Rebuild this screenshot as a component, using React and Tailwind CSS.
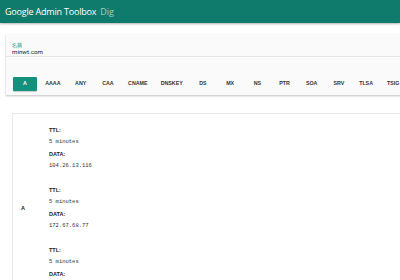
import React from "react";

const tabs = ["A","AAAA","ANY","CAA","CNAME","DNSKEY","DS","MX","NS","PTR","SOA","SRV","TLSA","TSIG","TXT"];
const records = ["104.26.13.116","172.67.68.77","104.26.12.116"];

export default function App() {
  return (
    <div className="w-[400px] h-[280px] overflow-hidden bg-white font-['Liberation_Sans',Arial,sans-serif]">
      <div className="h-[23px] bg-[#0f7b6c] flex items-center pl-[5px] gap-[4px] shadow-[0_1px_2px_rgba(0,0,0,0.3)] font-['Open_Sans',Roboto,sans-serif]">
        <span className="text-white text-[9px] tracking-[-0.2px]">Google Admin Toolbox</span>
        <span className="text-[#9fd3c5] text-[9px]">Dig</span>
      </div>
      <div className="ml-[6px] mt-[11px] w-[420px] h-[61px] bg-[#fafafa] shadow-[0_1px_2px_rgba(0,0,0,0.25)] flex flex-col">
        <div className="h-[23px] border-b border-[#e6e6e6] pl-[6px] pt-[8px] flex flex-col font-['Roboto',sans-serif]">
          <span className="text-[#2a9d84] text-[5px] leading-[6px] font-['Noto_Sans_CJK_TC',sans-serif]">名稱</span>
          <span className="text-[#222] text-[6.2px] leading-[9px]">minwt.com</span>
        </div>
        <div className="flex items-center gap-[3.2px] pl-[7px] mt-[20px]">
          {tabs.map((t, i) => (
            <div
              key={t}
              className={
                i === 0
                  ? "h-[14px] min-w-[24px] px-[5px] flex items-center justify-center text-[5.3px] font-bold shrink-0 bg-[#13917d] text-white rounded-[1px] shadow-[0_1px_1px_rgba(0,0,0,0.2)]"
                  : "h-[14px] min-w-[24px] px-[5px] flex items-center justify-center text-[5.3px] font-bold shrink-0 text-[#333]"
              }
            >
              {t}
            </div>
          ))}
        </div>
      </div>
      <div className="ml-[12px] mt-[18px] w-[420px] h-[200px] bg-white border-t border-l border-[#e8e8e8] flex">
        <div className="w-[36px] h-[188px] flex items-center pl-[8px]">
          <span className="text-[5.5px] font-bold text-[#222]">A</span>
        </div>
        <div className="flex flex-col pt-[10px]">
          {records.map((r) => (
            <div key={r} className="h-[60px] flex flex-col">
              <div className="h-[12px] flex items-center text-[5.5px] font-bold text-[#222]">TTL:</div>
              <div className="h-[12px] flex items-center text-[5.5px] text-[#333] font-['Liberation_Mono',monospace]">5 minutes</div>
              <div className="h-[12px] flex items-center text-[5.5px] font-bold text-[#222]">DATA:</div>
              <div className="h-[12px] flex items-center text-[5.5px] text-[#333] font-['Liberation_Mono',monospace]">{r}</div>
            </div>
          ))}
        </div>
      </div>
    </div>
  );
}
